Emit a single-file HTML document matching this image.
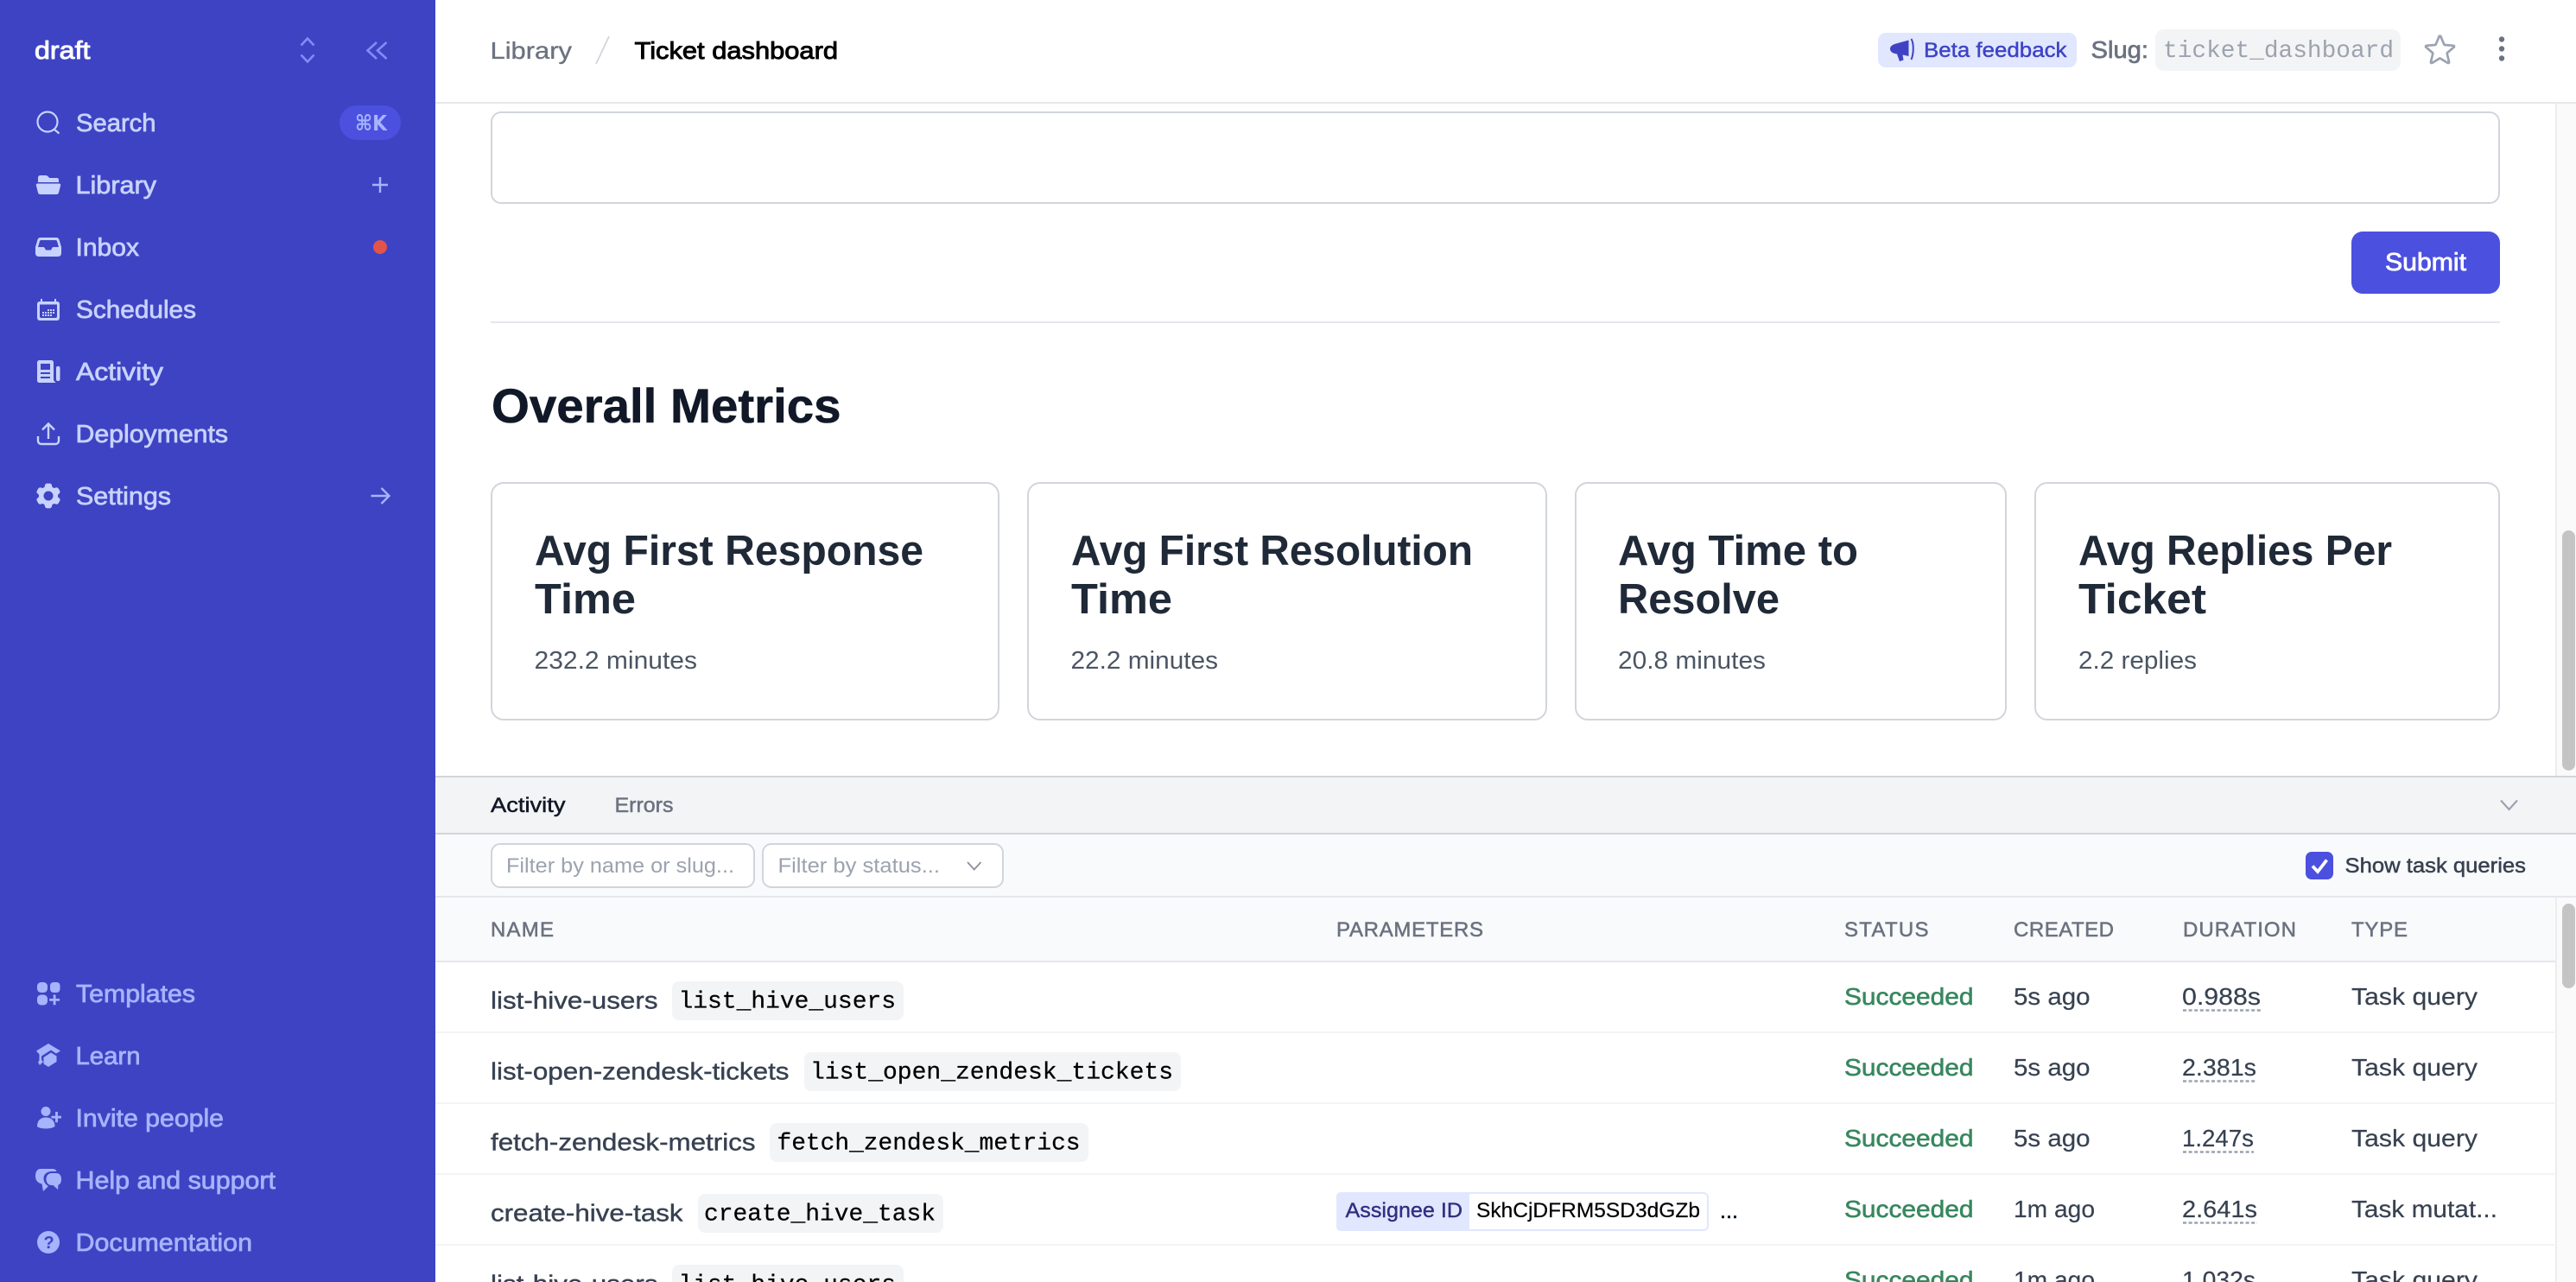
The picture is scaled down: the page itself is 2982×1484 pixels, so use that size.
<!DOCTYPE html>
<html lang="en"><head><meta charset="utf-8"><title>Ticket dashboard</title>
<style>
html,body{margin:0;padding:0;background:#fff;width:2982px;height:1484px;overflow:hidden}
svg{display:block}
text{font-family:"Liberation Sans",sans-serif;white-space:pre}
.m{stroke-width:.75px}
.mono{font-family:"Liberation Mono",monospace}
.nav{font-size:29px}
.a{fill:#c7d2fe;stroke:#c7d2fe}
.b{fill:#a5b4fc;stroke:#a5b4fc}
.h{font-size:49px;font-weight:700;fill:#1f2937}
.v{font-size:29px;fill:#4b5563}
.th{font-size:24px;fill:#6b7280;stroke:#6b7280;stroke-width:.55px}
.n{font-size:28px;fill:#374151;stroke:#374151;stroke-width:.4px}
.c{font-size:28px;fill:#000;stroke:#000;stroke-width:.25px}
.s{font-size:28px;fill:#38875f;stroke:#38875f;stroke-width:.6px}
.t{font-size:28px;fill:#374151;stroke:#374151;stroke-width:.2px}
.dash{stroke:#9ca3af;stroke-width:2.4;stroke-dasharray:4 2.6}
</style></head><body>
<svg width="2982" height="1484" viewBox="0 0 2982 1484" xmlns="http://www.w3.org/2000/svg">
<rect width="2982" height="1484" fill="#fff"/>

<!-- main scroll track -->
<rect x="2959" y="120" width="23" height="779" fill="#fafafa"/><rect x="2958" y="120" width="2" height="779" fill="#ededed"/>
<rect x="2966" y="614" width="15" height="278" rx="7.5" fill="#c4c4c4"/>

<!-- top bar -->
<rect x="504" y="118" width="2478" height="2" fill="#e5e7eb"/>
<text x="567.500" y="68" font-size="28" fill="#6b7280" stroke="#6b7280" stroke-width=".35" textLength="94.500" lengthAdjust="spacingAndGlyphs">Library</text>
<line x1="690" y1="74" x2="705" y2="42" stroke="#d1d5db" stroke-width="1.8"/>
<text x="734.5" y="68" font-size="28" fill="#000" stroke="#000" stroke-width=".9" textLength="235.5" lengthAdjust="spacingAndGlyphs">Ticket dashboard</text>

<rect x="2174" y="38" width="230" height="40" rx="9" fill="#e0e7ff"/>
<path d="M2195 50.500L2209.500 46.500V65L2202.500 63.500L2203.500 69.500L2199 71L2196 62.500C2192 62 2188 60.500 2188 56.500C2188 53.500 2191 51.500 2195 50.500Z" fill="#3f43c3"/>
<path d="M2212.500 45C2215.500 50 2215.500 62 2212.500 69" fill="none" stroke="#3f43c3" stroke-width="2"/>
<text x="2227" y="66" font-size="24.500" fill="#3f43c3" stroke="#3f43c3" stroke-width=".45" textLength="165.500" lengthAdjust="spacingAndGlyphs">Beta feedback</text>
<text x="2420.500" y="67" font-size="28" fill="#6b7280" stroke="#6b7280" stroke-width=".7" textLength="66.500" lengthAdjust="spacingAndGlyphs">Slug:</text>
<rect x="2495" y="34" width="284" height="48" rx="10" fill="#f3f4f6"/>
<text class="mono" x="2504" y="66" font-size="28" fill="#9ca3af" textLength="267" lengthAdjust="spacingAndGlyphs">ticket_dashboard</text>
<g transform="translate(2824.500 57.500) scale(1.8) translate(-12 -12)"><path d="M11.480 3.499a.562.562 0 011.040 0l2.125 5.111a.563.563 0 00.475.345l5.518.442c.499.040.701.663.321.988l-4.204 3.602a.563.563 0 00-.182.557l1.285 5.385a.562.562 0 01-.840.610l-4.725-2.885a.562.562 0 00-.586 0L6.982 20.540a.562.562 0 01-.840-.610l1.285-5.386a.562.562 0 00-.182-.557l-4.204-3.602a.563.563 0 01.321-.988l5.518-.442a.563.563 0 00.475-.345L11.480 3.500z" fill="none" stroke="#9ca3af" stroke-width="1.500"/></g>
<circle cx="2896" cy="45.500" r="3.200" fill="#6b7280"/><circle cx="2896" cy="56.500" r="3.200" fill="#6b7280"/><circle cx="2896" cy="67.500" r="3.200" fill="#6b7280"/>

<!-- form tail -->
<rect x="569" y="130" width="2324" height="105" rx="11" fill="#fff" stroke="#d1d5db" stroke-width="2"/>
<rect x="2722" y="268" width="172" height="72" rx="13" fill="#4c50df"/>
<text x="2761" y="313" font-size="29" fill="#fff" stroke="#fff" stroke-width=".8" textLength="94" lengthAdjust="spacingAndGlyphs">Submit</text>
<rect x="568" y="372" width="2326" height="2" fill="#e5e7eb"/>
<text x="569" y="489" font-size="56" font-weight="700" fill="#111827" stroke="#111827" stroke-width=".6" textLength="404.500" lengthAdjust="spacingAndGlyphs">Overall Metrics</text>

<!-- cards -->
<rect x="569" y="559" width="587" height="274" rx="14" fill="#fff" stroke="#d1d5db" stroke-width="2"/>
<rect x="1190" y="559" width="600" height="274" rx="14" fill="#fff" stroke="#d1d5db" stroke-width="2"/>
<rect x="1824" y="559" width="498" height="274" rx="14" fill="#fff" stroke="#d1d5db" stroke-width="2"/>
<rect x="2356" y="559" width="537" height="274" rx="14" fill="#fff" stroke="#d1d5db" stroke-width="2"/>
<text class="h" x="619" y="654" textLength="450" lengthAdjust="spacingAndGlyphs">Avg First Response</text>
<text class="h" x="619" y="710" textLength="117" lengthAdjust="spacingAndGlyphs">Time</text>
<text class="v" x="618.500" y="774" textLength="188.500" lengthAdjust="spacingAndGlyphs">232.2 minutes</text>
<text class="h" x="1240" y="654" textLength="465" lengthAdjust="spacingAndGlyphs">Avg First Resolution</text>
<text class="h" x="1240" y="710" textLength="117" lengthAdjust="spacingAndGlyphs">Time</text>
<text class="v" x="1239.500" y="774" textLength="170.500" lengthAdjust="spacingAndGlyphs">22.2 minutes</text>
<text class="h" x="1873" y="654" textLength="278" lengthAdjust="spacingAndGlyphs">Avg Time to</text>
<text class="h" x="1873" y="710" textLength="187" lengthAdjust="spacingAndGlyphs">Resolve</text>
<text class="v" x="1873" y="774" textLength="171" lengthAdjust="spacingAndGlyphs">20.8 minutes</text>
<text class="h" x="2406" y="654" textLength="363" lengthAdjust="spacingAndGlyphs">Avg Replies Per</text>
<text class="h" x="2406" y="710" textLength="148" lengthAdjust="spacingAndGlyphs">Ticket</text>
<text class="v" x="2406" y="774" textLength="137" lengthAdjust="spacingAndGlyphs">2.2 replies</text>

<!-- activity panel -->
<rect x="504" y="899" width="2478" height="66" fill="#f3f4f6"/>
<rect x="504" y="898" width="2478" height="2" fill="#d1d5db"/>
<rect x="504" y="964" width="2478" height="2" fill="#d1d5db"/>
<text x="568" y="940" font-size="24.500" fill="#111827" stroke="#111827" stroke-width=".5" textLength="86.500" lengthAdjust="spacingAndGlyphs">Activity</text>
<text x="711.500" y="940" font-size="24.500" fill="#6b7280" stroke="#6b7280" stroke-width=".5" textLength="68" lengthAdjust="spacingAndGlyphs">Errors</text>
<path d="M2895 926.500L2904.500 937L2914 926.500" fill="none" stroke="#9ca3af" stroke-width="2.200"/>

<rect x="504" y="966" width="2478" height="72" fill="#f9fafb"/>
<rect x="504" y="1037" width="2478" height="2" fill="#e5e7eb"/>
<rect x="569" y="977" width="304" height="50" rx="10" fill="#fff" stroke="#d1d5db" stroke-width="2"/>
<text x="586" y="1010" font-size="24.500" fill="#9ca3af" textLength="264" lengthAdjust="spacingAndGlyphs">Filter by name or slug...</text>
<rect x="883" y="977" width="278" height="50" rx="10" fill="#fff" stroke="#d1d5db" stroke-width="2"/>
<text x="900.500" y="1010" font-size="24.500" fill="#9ca3af" textLength="187.500" lengthAdjust="spacingAndGlyphs">Filter by status...</text>
<path d="M1120 998L1127.700 1006.500L1135.500 998" fill="none" stroke="#8b919c" stroke-width="1.800"/>
<rect x="2669" y="986" width="32" height="32" rx="7" fill="#4c50df"/>
<path d="M2677 1002.500L2683 1009L2693.500 995.500" fill="none" stroke="#fff" stroke-width="3.800"/>
<text x="2714.500" y="1010" font-size="24.500" fill="#374151" stroke="#374151" stroke-width=".5" textLength="209.500" lengthAdjust="spacingAndGlyphs">Show task queries</text>

<rect x="504" y="1039" width="2478" height="74" fill="#f9fafb"/>
<rect x="504" y="1112" width="2455" height="2" fill="#e5e7eb"/>
<rect x="2959" y="1039" width="23" height="445" fill="#fafafa"/><rect x="2958" y="1039" width="2" height="445" fill="#ededed"/>
<rect x="2966" y="1046" width="15" height="98" rx="7.500" fill="#c4c4c4"/>
<text class="th" x="568" y="1084" textLength="73" lengthAdjust="spacing">NAME</text>
<text class="th" x="1547" y="1084" textLength="170" lengthAdjust="spacing">PARAMETERS</text>
<text class="th" x="2135" y="1084" textLength="97.500" lengthAdjust="spacing">STATUS</text>
<text class="th" x="2331" y="1084" textLength="116" lengthAdjust="spacing">CREATED</text>
<text class="th" x="2527" y="1084" textLength="131" lengthAdjust="spacing">DURATION</text>
<text class="th" x="2722" y="1084" textLength="65" lengthAdjust="spacing">TYPE</text>

<rect x="504" y="1194" width="2455" height="2" fill="#f3f4f6"/>
<rect x="504" y="1276" width="2455" height="2" fill="#f3f4f6"/>
<rect x="504" y="1358" width="2455" height="2" fill="#f3f4f6"/>
<rect x="504" y="1440" width="2455" height="2" fill="#f3f4f6"/>

<!-- row 1 -->
<text class="n" x="568" y="1167.500" textLength="193.500" lengthAdjust="spacingAndGlyphs">list-hive-users</text>
<rect x="778" y="1136" width="268" height="45" rx="8" fill="#f3f4f6"/>
<text class="c mono" x="785.500" y="1166.500" textLength="251.500" lengthAdjust="spacingAndGlyphs">list_hive_users</text>
<text class="s" x="2135" y="1163" textLength="149.500" lengthAdjust="spacingAndGlyphs">Succeeded</text>
<text class="t" x="2331" y="1163" textLength="88.500" lengthAdjust="spacingAndGlyphs">5s ago</text>
<text class="t" x="2526" y="1163" textLength="91" lengthAdjust="spacingAndGlyphs">0.988s</text><line class="dash" x1="2527" y1="1169.500" x2="2617" y2="1169.500"/>
<text class="t" x="2722" y="1163" textLength="146" lengthAdjust="spacingAndGlyphs">Task query</text>
<!-- row 2 -->
<text class="n" x="568" y="1249.500" textLength="345.500" lengthAdjust="spacingAndGlyphs">list-open-zendesk-tickets</text>
<rect x="931" y="1218" width="436" height="45" rx="8" fill="#f3f4f6"/>
<text class="c mono" x="938" y="1248.500" textLength="420" lengthAdjust="spacingAndGlyphs">list_open_zendesk_tickets</text>
<text class="s" x="2135" y="1245" textLength="149.500" lengthAdjust="spacingAndGlyphs">Succeeded</text>
<text class="t" x="2331" y="1245" textLength="88.500" lengthAdjust="spacingAndGlyphs">5s ago</text>
<text class="t" x="2526" y="1245" textLength="86" lengthAdjust="spacingAndGlyphs">2.381s</text><line class="dash" x1="2527" y1="1251.500" x2="2612" y2="1251.500"/>
<text class="t" x="2722" y="1245" textLength="146" lengthAdjust="spacingAndGlyphs">Task query</text>
<!-- row 3 -->
<text class="n" x="568" y="1331.500" textLength="306.500" lengthAdjust="spacingAndGlyphs">fetch-zendesk-metrics</text>
<rect x="891" y="1300" width="369" height="45" rx="8" fill="#f3f4f6"/>
<text class="c mono" x="899.500" y="1330.500" textLength="351" lengthAdjust="spacingAndGlyphs">fetch_zendesk_metrics</text>
<text class="s" x="2135" y="1327" textLength="149.500" lengthAdjust="spacingAndGlyphs">Succeeded</text>
<text class="t" x="2331" y="1327" textLength="88.500" lengthAdjust="spacingAndGlyphs">5s ago</text>
<text class="t" x="2526" y="1327" textLength="83" lengthAdjust="spacingAndGlyphs">1.247s</text><line class="dash" x1="2527" y1="1333.500" x2="2609" y2="1333.500"/>
<text class="t" x="2722" y="1327" textLength="146" lengthAdjust="spacingAndGlyphs">Task query</text>
<!-- row 4 -->
<text class="n" x="568" y="1413.500" textLength="222.500" lengthAdjust="spacingAndGlyphs">create-hive-task</text>
<rect x="808" y="1382" width="284" height="45" rx="8" fill="#f3f4f6"/>
<text class="c mono" x="815" y="1412.500" textLength="268" lengthAdjust="spacingAndGlyphs">create_hive_task</text>
<rect x="1548" y="1381" width="429" height="43" rx="5" fill="#fff" stroke="#e0e7ff" stroke-width="2"/>
<path d="M1552 1380H1701V1425H1552A5 5 0 0 1 1547 1420V1385A5 5 0 0 1 1552 1380Z" fill="#e0e7ff"/>
<text x="1557.500" y="1409" font-size="24.500" fill="#312e81" stroke="#312e81" stroke-width=".4" textLength="135.500" lengthAdjust="spacingAndGlyphs">Assignee ID</text>
<text x="1709" y="1409" font-size="24.500" fill="#000" stroke="#000" stroke-width=".2" textLength="259" lengthAdjust="spacingAndGlyphs">SkhCjDFRM5SD3dGZb</text>
<text x="1991" y="1410" font-size="24.500" fill="#111827" stroke="#111827" stroke-width=".6" textLength="21" lengthAdjust="spacingAndGlyphs">...</text>
<text class="s" x="2135" y="1409" textLength="149.500" lengthAdjust="spacingAndGlyphs">Succeeded</text>
<text class="t" x="2331" y="1409" textLength="94" lengthAdjust="spacingAndGlyphs">1m ago</text>
<text class="t" x="2526" y="1409" textLength="87" lengthAdjust="spacingAndGlyphs">2.641s</text><line class="dash" x1="2527" y1="1415.500" x2="2613" y2="1415.500"/>
<text class="t" x="2722" y="1409" textLength="169" lengthAdjust="spacingAndGlyphs">Task mutat...</text>
<!-- row 5 -->
<text class="n" x="568" y="1495.500" textLength="193.500" lengthAdjust="spacingAndGlyphs">list-hive-users</text>
<rect x="778" y="1464" width="268" height="45" rx="8" fill="#f3f4f6"/>
<text class="c mono" x="785.500" y="1494.500" textLength="251.500" lengthAdjust="spacingAndGlyphs">list_hive_users</text>
<text class="s" x="2135" y="1491" textLength="149.500" lengthAdjust="spacingAndGlyphs">Succeeded</text>
<text class="t" x="2331" y="1491" textLength="94" lengthAdjust="spacingAndGlyphs">1m ago</text>
<text class="t" x="2526" y="1491" textLength="85" lengthAdjust="spacingAndGlyphs">1.032s</text>
<text class="t" x="2722" y="1491" textLength="146" lengthAdjust="spacingAndGlyphs">Task query</text>

<!-- sidebar -->
<rect x="0" y="0" width="504" height="1484" fill="#3e43c3"/>
<text x="40" y="68" font-size="29" fill="#fff" stroke="#fff" stroke-width=".9" textLength="64.500" lengthAdjust="spacingAndGlyphs">draft</text>
<path d="M348.500 52.500L356 44.500L363.500 52.500M348.500 63.500L356 71.500L363.500 63.500" fill="none" stroke="#818cf8" stroke-width="2.600"/>
<path d="M436 49L425.500 58.500L436 68M447.500 49L437 58.500L447.500 68" fill="none" stroke="#818cf8" stroke-width="2.600"/>

<text class="nav a m" x="88" y="152" textLength="92.500" lengthAdjust="spacingAndGlyphs">Search</text>
<text class="nav a m" x="87.500" y="224" textLength="93.500" lengthAdjust="spacingAndGlyphs">Library</text>
<text class="nav a m" x="87.500" y="296" textLength="73.500" lengthAdjust="spacingAndGlyphs">Inbox</text>
<text class="nav a m" x="88" y="368" textLength="139" lengthAdjust="spacingAndGlyphs">Schedules</text>
<text class="nav a m" x="88" y="440" textLength="101" lengthAdjust="spacingAndGlyphs">Activity</text>
<text class="nav a m" x="87.500" y="512" textLength="176.500" lengthAdjust="spacingAndGlyphs">Deployments</text>
<text class="nav a m" x="88" y="584" textLength="110" lengthAdjust="spacingAndGlyphs">Settings</text>
<text class="nav b m" x="88" y="1160" textLength="138" lengthAdjust="spacingAndGlyphs">Templates</text>
<text class="nav b m" x="87.500" y="1232" textLength="75" lengthAdjust="spacingAndGlyphs">Learn</text>
<text class="nav b m" x="87.500" y="1304" textLength="171.500" lengthAdjust="spacingAndGlyphs">Invite people</text>
<text class="nav b m" x="87.500" y="1376" textLength="231.500" lengthAdjust="spacingAndGlyphs">Help and support</text>
<text class="nav b m" x="87.500" y="1448" textLength="204.500" lengthAdjust="spacingAndGlyphs">Documentation</text>

<rect x="393" y="122" width="71" height="40" rx="20" fill="#4b50df"/>
<text x="411" y="151" font-size="25" font-weight="700" fill="#a5b4fc" style="font-family:'DejaVu Sans','Liberation Sans',sans-serif" textLength="37" lengthAdjust="spacingAndGlyphs">⌘K</text>
<path d="M431 214H449M440 205V223" stroke="#a5b4fc" stroke-width="2.400" fill="none"/>
<circle cx="440" cy="286" r="8" fill="#e2534a"/>
<path d="M429.500 574H450M441.500 565L450.500 574L441.500 583" fill="none" stroke="#a5b4fc" stroke-width="2.400"/>

<!-- nav icons -->
<g fill="none" stroke="#c7d2fe" stroke-width="2.200"><circle cx="55" cy="141" r="11.500"/><path d="M62.500 149.500L68.500 154.500"/></g>
<path d="M44 211V206C44 204 45 203 47 203H53C55 203 56 205 57.500 206H66C67.500 206 68 207 68 209V211ZM44 212.500H68C70 212.500 70.500 213.500 70 215L68 223C67.500 224.500 66.500 225 65 225H47C45.500 225 44.500 224.500 44 223L42 215C41.500 213.500 42 212.500 44 212.500Z" fill="#c7d2fe"/>
<path fill-rule="evenodd" d="M47 275H65C67 275 68 276 68.500 277.500L71 286V293C71 295.500 69.500 297 67 297H45C42.500 297 41 295.500 41 293V286L43.500 277.500C44 276 45 275 47 275ZM47.500 278C46.800 278 46.300 278.400 46 279L44 286H50C51 286 51.500 286.500 52 287.500L53 289.500H59L60 287.500C60.500 286.500 61 286 62 286H68L66 279C65.700 278.400 65.200 278 64.500 278Z" fill="#c7d2fe"/>
<g fill="#c7d2fe"><path fill-rule="evenodd" d="M47 346H49V349H63V346H65V349H66C68 349 69 350.500 69 352V367C69 369.500 68 371 66 371H46C44 371 43 369.500 43 367V352C43 350.500 44 349 46 349H47ZM46 352.500V366C46 367.500 46.500 368 48 368H64C65.500 368 66 367.500 66 366V352.500Z"/><rect x="49" y="361" width="2" height="2"/><rect x="49" y="364" width="2" height="2"/><rect x="52" y="361" width="2" height="2"/><rect x="52" y="364" width="2" height="2"/><rect x="55" y="361" width="2" height="2"/><rect x="55" y="364" width="2" height="2"/><rect x="58" y="358" width="2" height="2"/><rect x="58" y="361" width="2" height="2"/><rect x="58" y="364" width="2" height="2"/><rect x="61" y="358" width="2" height="2"/><rect x="61" y="361" width="2" height="2"/><rect x="55" y="358" width="2" height="2"/></g>
<path fill-rule="evenodd" d="M46 417H59C61 417 62 418 62 420V439C62 440.500 63 442 65 443H46C44 443 43 442 43 440V420C43 418 44 417 46 417ZM47 421V428H58V421ZM47 431V433H58V431ZM47 436V438H58V436Z" fill="#c7d2fe"/>
<rect x="65" y="424" width="4.500" height="17" rx="2" fill="#c7d2fe"/>
<path d="M56 508V491M49 497.500L56 490.500L63 497.500M44 505V510C44 512.500 45.500 514 48 514H64C66.500 514 68 512.500 68 510V505" fill="none" stroke="#c7d2fe" stroke-width="2.400"/>
<g transform="translate(56 574) scale(1.470) translate(-12 -12)"><path fill="#c7d2fe" fill-rule="evenodd" d="M11.078 2.250c-.917 0-1.699.663-1.850 1.567L9.050 4.889c-.020.120-.115.260-.297.348a7.493 7.493 0 00-.986.570c-.166.115-.334.126-.450.083L6.300 5.508a1.875 1.875 0 00-2.282.819l-.922 1.597a1.875 1.875 0 00.432 2.385l.840.692c.095.078.170.229.154.430a7.598 7.598 0 000 1.139c.015.200-.059.352-.153.430l-.841.692a1.875 1.875 0 00-.432 2.385l.922 1.597a1.875 1.875 0 002.282.818l1.019-.382c.115-.043.283-.031.450.082.312.214.641.405.985.570.182.088.277.228.297.350l.178 1.071c.151.904.933 1.567 1.850 1.567h1.844c.916 0 1.699-.663 1.850-1.567l.178-1.072c.020-.120.114-.260.297-.349.344-.165.673-.356.985-.570.167-.114.335-.125.450-.082l1.020.382a1.875 1.875 0 002.280-.819l.923-1.597a1.875 1.875 0 00-.432-2.385l-.840-.692c-.095-.078-.170-.229-.154-.430a7.614 7.614 0 000-1.139c-.016-.200.059-.352.153-.430l.840-.692c.708-.582.891-1.590.433-2.385l-.922-1.597a1.875 1.875 0 00-2.282-.818l-1.020.382c-.114.043-.282.031-.449-.083a7.490 7.490 0 00-.985-.570c-.183-.087-.277-.227-.297-.348l-.179-1.072a1.875 1.875 0 00-1.850-1.567h-1.843zM12 15.750a3.750 3.750 0 100-7.500 3.750 3.750 0 000 7.500z"/></g>

<g fill="#a5b4fc">
<rect x="43" y="1137" width="12" height="12" rx="4.500"/><rect x="58" y="1137" width="11.500" height="12" rx="4"/><rect x="43" y="1151.500" width="12" height="12" rx="4.500"/>
<path d="M61.700 1151.500H64.500V1156H69V1158.800H64.500V1163.300H61.700V1158.800H57.200V1156H61.700Z"/>
<path fill-rule="evenodd" d="M56 1208L70 1216.500L65 1219.500L59 1215.500L48 1222.500V1227L50 1229L46 1233L44 1229.500L45.500 1227.500V1220.500L42 1216.500ZM50.500 1224L59 1218.500L65.500 1222.500V1229L56 1235L50.500 1231.500Z"/>
<circle cx="53" cy="1286.500" r="5.500"/><path d="M43 1304C43 1297 47 1293.500 53 1293.500C59 1293.500 63.500 1297 63.500 1304C60 1307 47 1307.500 43 1304Z"/>
<path d="M64.100 1287H66.900V1291.700H71V1294.500H66.900V1299.200H64.100V1294.500H59.500V1291.700H64.100Z"/>
<path d="M47 1353H60C63 1353 65 1354 65.500 1356H60C54 1356 50.500 1359.500 50.500 1364C50.500 1368 53 1371.500 56 1373L50 1379L48.500 1370.500C44 1369.500 41 1366.500 41 1361.500C41 1356.500 43 1353 47 1353Z"/>
<path d="M60 1358H65C69 1358 71 1361 71 1365C71 1369 69.500 1371 67.500 1371.500L67 1377L61.500 1372H60C56 1372 53.500 1369 53.500 1365C53.500 1361 56 1358 60 1358Z"/>
<circle cx="56" cy="1438" r="13"/>
</g>
<text x="50.500" y="1445" font-size="20" font-weight="700" fill="#3e43c3">?</text>
</svg>
</body></html>
